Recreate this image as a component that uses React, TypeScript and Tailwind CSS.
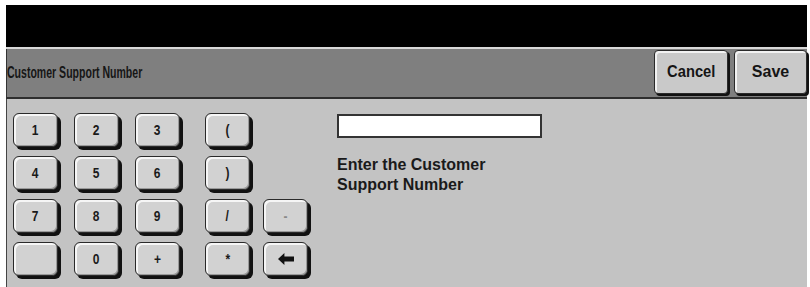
import React from 'react';

const keyClass =
  'flex items-center justify-center w-[45px] h-[34px] rounded-[6px] border border-[#2a2a2a] bg-[#d2d2d2] shadow-[3px_3px_0_#111,inset_2px_2px_0_#f6f6f6,inset_-1px_-1px_0_#9a9a9a] text-[15px] font-bold text-[#1a1a1a]';

const Arrow = () => (
  <svg width="22" height="14" viewBox="0 0 22 14">
    <path d="M1 7 L9 1 L9 4.5 L21 4.5 L21 9.5 L9 9.5 L9 13 Z" fill="#111" />
  </svg>
);

const keys: { label: React.ReactNode; col: string; muted?: boolean }[] = [
  { label: '1', col: '' },
  { label: '2', col: '' },
  { label: '3', col: '' },
  { label: '(', col: 'justify-self-end' },
  { label: '', col: 'invisible' },
  { label: '4', col: '' },
  { label: '5', col: '' },
  { label: '6', col: '' },
  { label: ')', col: 'justify-self-end' },
  { label: '', col: 'invisible' },
  { label: '7', col: '' },
  { label: '8', col: '' },
  { label: '9', col: '' },
  { label: '/', col: 'justify-self-end' },
  { label: '-', col: '', muted: true },
  { label: '', col: '' },
  { label: '0', col: '' },
  { label: '+', col: '' },
  { label: '*', col: 'justify-self-end' },
  { label: <Arrow />, col: '' },
];

export default function App() {
  return (
    <div className="w-[810px] h-[287px] bg-white pl-[6px] pt-[5px] pr-[3px] overflow-hidden" style={{ fontFamily: '"Liberation Sans", Arial, sans-serif' }}>
      <div className="h-[42px] bg-black" />
      <div className="h-[2px] bg-[#d8d8d8]" />
      <div className="h-[50px] bg-[#7f7f7f] border-l border-[#333] border-b-2 border-b-[#2e2e2e] flex items-center">
        <span className="inline-block origin-left scale-x-[0.62] text-[17px] font-bold text-[#161616] whitespace-nowrap">
          Customer Support Number
        </span>
        <div className="ml-auto flex gap-[6px] pb-[2px]">
          <button className="w-[74px] h-[44px] rounded-[4px] border border-[#2a2a2a] bg-[#c9c9c9] shadow-[2px_2px_0_#111,inset_2px_2px_0_#f2f2f2] flex items-center justify-center">
            <span className="inline-block scale-x-[0.92] text-[16px] font-bold text-[#151515]">Cancel</span>
          </button>
          <button className="w-[73px] h-[44px] rounded-[4px] border border-[#2a2a2a] bg-[#c9c9c9] shadow-[2px_2px_0_#111,inset_2px_2px_0_#f2f2f2] flex items-center justify-center">
            <span className="inline-block text-[16px] font-bold text-[#151515]">Save</span>
          </button>
        </div>
      </div>
      <div className="h-[200px] bg-[#c3c3c3] border-l border-[#444] flex">
        <div className="pl-[6px] pt-[14px] grid grid-cols-[48px_48px_48px_54px_48px] gap-x-[13px] gap-y-[6px] auto-rows-[37px]">
          {keys.map((k, i) => (
            <div key={i} className={k.col}>
              <div className={keyClass + (k.muted ? ' text-[#8a8a8a]' : '')}>
                <span className="inline-block scale-x-[0.8]">{k.label}</span>
              </div>
            </div>
          ))}
        </div>
        <div className="ml-[26px] pt-[15px]">
          <div className="w-[205px] h-[24px] bg-white border-2 border-[#333]" />
          <p className="mt-[17px] text-[16px] font-bold leading-[20px] text-[#1a1a1a]">
            Enter the Customer
            <br />
            Support Number
          </p>
        </div>
      </div>
    </div>
  );
}
